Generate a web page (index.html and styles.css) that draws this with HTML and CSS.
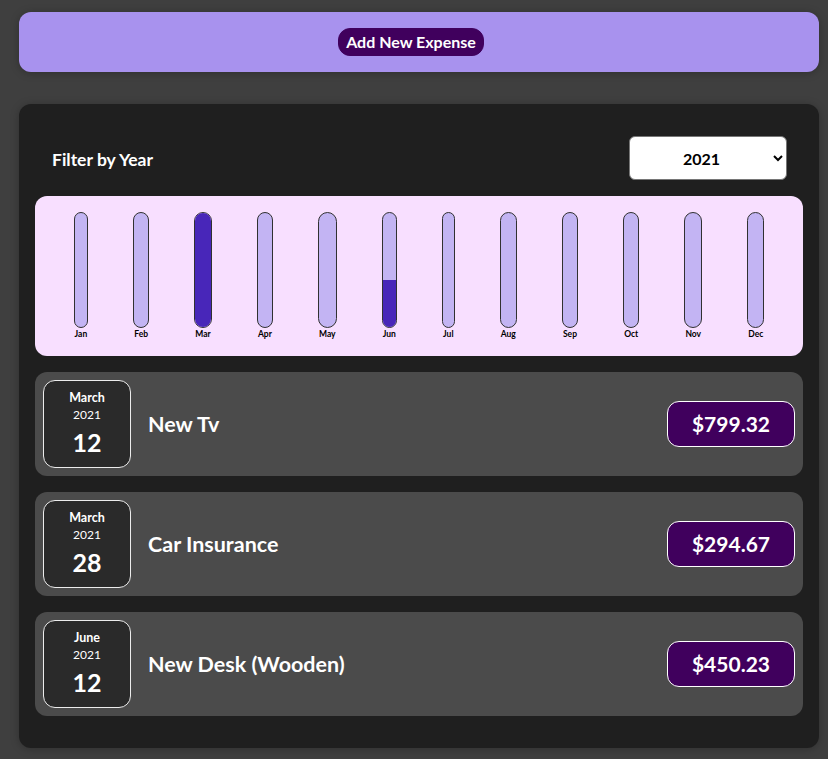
FILE: index.html
```html
<!DOCTYPE html>
<html lang="en">
<head>
<meta charset="utf-8">
<title>Expenses</title>
<link rel="stylesheet" href="styles.css">
</head>
<body>
<div class="new-expense">
  <button class="add-btn">Add New Expense</button>
</div>
<div class="expenses">
  <div class="filter">
    <label class="filter-label">Filter by Year</label>
    <select class="filter-select">
      <option>2022</option>
      <option selected>2021</option>
      <option>2020</option>
      <option>2019</option>
    </select>
  </div>
  <div class="chart">
    <div class="bar"><div class="bar-inner"><div class="bar-fill" style="height:0%"></div></div><div class="bar-label">Jan</div></div>
    <div class="bar"><div class="bar-inner"><div class="bar-fill" style="height:0%"></div></div><div class="bar-label">Feb</div></div>
    <div class="bar"><div class="bar-inner"><div class="bar-fill" style="height:100%"></div></div><div class="bar-label">Mar</div></div>
    <div class="bar"><div class="bar-inner"><div class="bar-fill" style="height:0%"></div></div><div class="bar-label">Apr</div></div>
    <div class="bar"><div class="bar-inner"><div class="bar-fill" style="height:0%"></div></div><div class="bar-label">May</div></div>
    <div class="bar"><div class="bar-inner"><div class="bar-fill" style="height:41%"></div></div><div class="bar-label">Jun</div></div>
    <div class="bar"><div class="bar-inner"><div class="bar-fill" style="height:0%"></div></div><div class="bar-label">Jul</div></div>
    <div class="bar"><div class="bar-inner"><div class="bar-fill" style="height:0%"></div></div><div class="bar-label">Aug</div></div>
    <div class="bar"><div class="bar-inner"><div class="bar-fill" style="height:0%"></div></div><div class="bar-label">Sep</div></div>
    <div class="bar"><div class="bar-inner"><div class="bar-fill" style="height:0%"></div></div><div class="bar-label">Oct</div></div>
    <div class="bar"><div class="bar-inner"><div class="bar-fill" style="height:0%"></div></div><div class="bar-label">Nov</div></div>
    <div class="bar"><div class="bar-inner"><div class="bar-fill" style="height:0%"></div></div><div class="bar-label">Dec</div></div>
  </div>
  <ul class="list">
    <li class="item">
      <div class="date"><div class="date-month">March</div><div class="date-year">2021</div><div class="date-day">12</div></div>
      <h2 class="title">New Tv</h2>
      <div class="price">$799.32</div>
    </li>
    <li class="item">
      <div class="date"><div class="date-month">March</div><div class="date-year">2021</div><div class="date-day">28</div></div>
      <h2 class="title">Car Insurance</h2>
      <div class="price">$294.67</div>
    </li>
    <li class="item">
      <div class="date"><div class="date-month">June</div><div class="date-year">2021</div><div class="date-day">12</div></div>
      <h2 class="title">New Desk (Wooden)</h2>
      <div class="price">$450.23</div>
    </li>
  </ul>
</div>
</body>
</html>
```
FILE: styles.css
```css
* { box-sizing: border-box; }
html, body { margin: 0; padding: 0; }
body {
  background: #3f3f3f;
  font-family: Lato, "Noto Sans", sans-serif;
  padding: 12px 9px 12px 19px;
}
.new-expense {
  width: 800px;
  background: #a892ee;
  border-radius: 12px;
  padding: 16px;
  text-align: center;
  box-shadow: 0 1px 8px rgba(0,0,0,0.25);
}
.add-btn {
  font-family: inherit;
  font-size: 16px;
  font-weight: 700;
  line-height: 24px;
  height: 28px;
  padding: 0 7px;
  margin-right: 16px;
  background: #40005d;
  color: #fff;
  border: 1px solid #40005d;
  border-radius: 12px;
  vertical-align: top;
}
.expenses {
  width: 800px;
  margin-top: 32px;
  background: #1f1f1f;
  border-radius: 12px;
  padding: 16px 16px 16px;
  box-shadow: 0 1px 8px rgba(0,0,0,0.25);
}
.filter {
  display: flex;
  justify-content: space-between;
  align-items: center;
  padding: 0 16px;
  margin: 16px 0;
  color: #fff;
}
.filter-label {
  font-weight: 700;
  font-size: 17.5px;
  padding-left: 1px;
  padding-top: 2px;
}
.filter-select {
  font-family: inherit;
  font-weight: 700;
  font-size: 16px;
  width: 158px;
  height: 44px;
  padding: 0 8px 0 49px;
  border-radius: 6px;
  border: 1px solid #767676;
  background: #fff;
  color: #000;
}
.chart {
  display: flex;
  justify-content: space-around;
  height: 160px;
  padding: 16px;
  border-radius: 12px;
  background: #f8dfff;
}
.bar {
  height: 100%;
  display: flex;
  flex-direction: column;
  align-items: center;
}
.bar-inner {
  flex: 1;
  width: 100%;
  border: 1px solid #313131;
  border-radius: 12px;
  background: #c3b4f3;
  overflow: hidden;
  display: flex;
  flex-direction: column;
  justify-content: flex-end;
}
.bar-fill {
  width: 100%;
  background: #4826b9;
}
.bar-label {
  font-size: 8.5px;
  font-weight: 700;
  line-height: 12px;
  color: #000;
  padding: 0 1px;
}
.list {
  list-style: none;
  margin: 0;
  padding: 0 0 16px;
}
.item {
  display: flex;
  align-items: center;
  margin: 16px 0;
  padding: 8px;
  background: #4b4b4b;
  border-radius: 12px;
}
.item:last-child { margin-bottom: 0; }
.date {
  width: 88px;
  height: 88px;
  flex: none;
  display: flex;
  flex-direction: column;
  align-items: center;
  justify-content: center;
  background: #2a2a2a;
  border: 1px solid #ececec;
  border-radius: 12px;
  color: #fff;
}
.date-month { font-size: 12.5px; font-weight: 700; line-height: 17px; }
.date-year { font-size: 12px; line-height: 17px; }
.date-day { font-size: 25px; font-weight: 700; line-height: 36px; padding-top: 1px; }
.title {
  flex: 1;
  margin: 0 16px 0 17px;
  font-size: 21.5px;
  font-weight: 700;
  color: #fff;
}
.price {
  font-size: 21px;
  font-weight: 700;
  color: #fff;
  background: #40005d;
  border: 1px solid #fff;
  border-radius: 12px;
  padding: 8px 24px;
  line-height: 28px;
}
```
